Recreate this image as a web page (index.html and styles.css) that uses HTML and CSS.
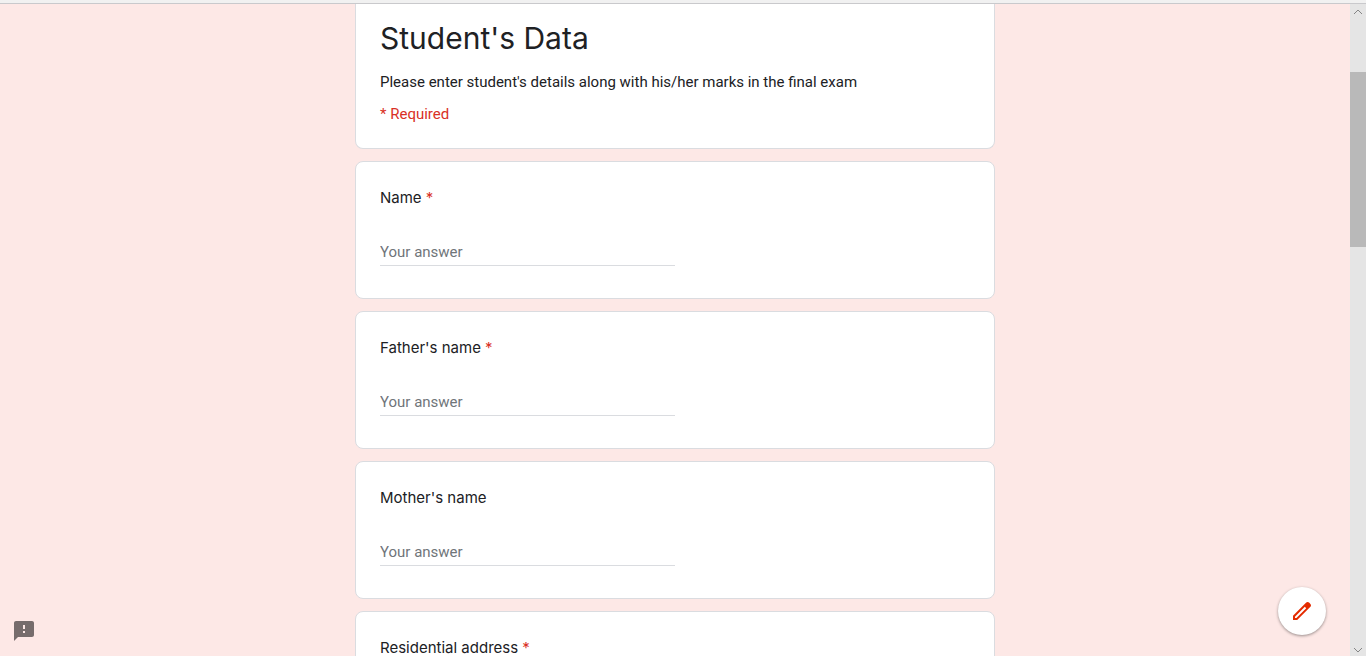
FILE: index.html
```html
<!DOCTYPE html>
<html lang="en">
<head>
<meta charset="utf-8">
<title>Student's Data</title>
<link rel="stylesheet" href="styles.css">
</head>
<body class="page">
<div class="toolbar-edge"></div>
<div class="viewport">
  <main class="content">
    <form class="form">
      <header class="card card-intro">
        <h1 class="title">Student's Data</h1>
        <p class="description">Please enter student's details along with his/her marks in the final exam</p>
        <p class="required-note">* Required</p>
      </header>
      <section class="card question">
        <label class="question-label" for="name">Name <span class="star">*</span></label>
        <input class="answer" id="name" type="text" placeholder="Your answer" required>
      </section>
      <section class="card question">
        <label class="question-label" for="father">Father's name <span class="star">*</span></label>
        <input class="answer" id="father" type="text" placeholder="Your answer" required>
      </section>
      <section class="card question">
        <label class="question-label" for="mother">Mother's name</label>
        <input class="answer" id="mother" type="text" placeholder="Your answer">
      </section>
      <section class="card question">
        <label class="question-label" for="address">Residential address <span class="star">*</span></label>
        <input class="answer" id="address" type="text" placeholder="Your answer" required>
      </section>
    </form>
    <button class="report" type="button" aria-label="Report a problem">
      <svg width="24" height="24" viewBox="0 0 24 24"><path fill="#766c6c" d="M20 2H4c-1.100 0-1.990.9-1.990 2L2 22l4-4h14c1.100 0 2-.9 2-2V4c0-1.100-.9-2-2-2zm-7 12h-2v-2h2v2zm0-4h-2V6h2v4z"/></svg>
    </button>
    <button class="edit" type="button" aria-label="Edit this form">
      <svg width="24" height="24" viewBox="0 0 24 24"><path fill="#e42b00" fill-rule="evenodd" d="M20.410 4.940l-1.350-1.350c-.78-.78-2.050-.78-2.830 0L3 16.820V21h4.180L20.410 7.770c.79-.78.79-2.050 0-2.830zM6.410 19.060L5 19v-1.360l9.820-9.820 1.410 1.410-9.820 9.830z"/></svg>
    </button>
  </main>
  <div class="scrollbar" aria-hidden="true">
    <svg class="arrow" width="16" height="17" viewBox="0 0 16 17"><path d="M4 10l4-4 4 4" fill="none" stroke="#858585"/></svg>
    <div class="track"><div class="thumb"></div></div>
    <svg class="arrow" width="16" height="17" viewBox="0 0 16 17"><path d="M4 9l4 4 4-4" fill="none" stroke="#858585"/></svg>
  </div>
</div>
</body>
</html>
```
FILE: styles.css
```css
* {
  box-sizing: border-box;
}

.page {
  margin: 0;
  height: 100vh;
  display: flex;
  flex-direction: column;
  overflow: hidden;
  background: #fde8e6;
  color: #202124;
  font-family: Roboto, "Liberation Sans", sans-serif;
}

.toolbar-edge {
  flex: none;
  height: 4px;
  background: #f1f1f1;
  border-bottom: 1px solid #c9c9cc;
}

.viewport {
  flex: 1;
  min-height: 0;
  display: flex;
}

.content {
  flex: 1;
  position: relative;
  overflow: hidden;
}

.form {
  max-width: 640px;
  margin: 0 auto;
  display: flex;
  flex-direction: column;
  gap: 12px;
}

.card {
  background: #fff;
  border: 1px solid #dadce0;
  border-radius: 8px;
  padding: 24px;
}

.card-intro {
  border-top: 0;
  border-radius: 0 0 8px 8px;
  padding-top: 14px;
}

.title {
  margin: 0;
  font-family: Inter, Roboto, sans-serif;
  font-size: 30px;
  font-weight: 400;
  line-height: 40px;
}

.description,
.required-note {
  margin: 0;
  font-size: 15px;
  line-height: 20px;
}

.description {
  margin-top: 14px;
}

.required-note {
  margin-top: 12px;
  color: #d93025;
}

.question {
  display: flex;
  flex-direction: column;
  gap: 30px;
  padding-bottom: 32px;
}

.question-label {
  font-family: Inter, Roboto, sans-serif;
  font-size: 15px;
  line-height: 24px;
}

.star {
  color: #d93025;
}

.answer {
  width: 50%;
  height: 26px;
  padding: 0 0 2px;
  border: 0;
  border-bottom: 1px solid #dadce0;
  background: transparent;
  color: inherit;
  font: 15px/20px Roboto, "Liberation Sans", sans-serif;
  outline: 0;
}

.answer::placeholder {
  color: #70757a;
}

.report,
.edit {
  position: absolute;
  padding: 0;
  border: 0;
  display: flex;
  align-items: center;
  justify-content: center;
}

.report {
  left: 12px;
  bottom: 13px;
  background: transparent;
}

.edit {
  right: 24px;
  bottom: 21px;
  width: 48px;
  height: 48px;
  border-radius: 50%;
  background: #fff;
  box-shadow: 0 1px 3px rgba(0, 0, 0, 0.4);
}

.scrollbar {
  flex: none;
  width: 16px;
  display: flex;
  flex-direction: column;
  background: #e5e5e5;
}

.arrow {
  flex: none;
}

.track {
  flex: 1;
  padding-top: 51px;
}

.thumb {
  height: 175px;
  background: #b9b9b9;
}
```
